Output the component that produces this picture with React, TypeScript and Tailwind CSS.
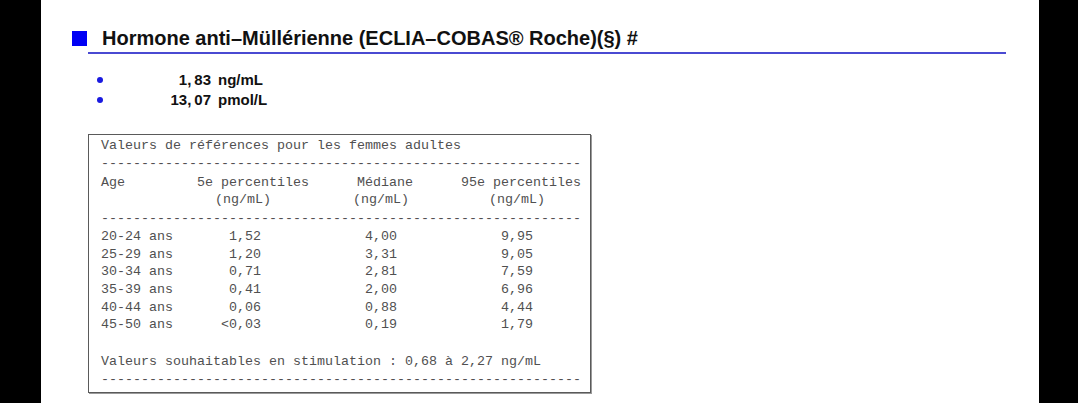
const rows = [
  ["20-24 ans", "1,52", "4,00", "9,95"],
  ["25-29 ans", "1,20", "3,31", "9,05"],
  ["30-34 ans", "0,71", "2,81", "7,59"],
  ["35-39 ans", "0,41", "2,00", "6,96"],
  ["40-44 ans", "0,06", "0,88", "4,44"],
  ["45-50 ans", "<0,03", "0,19", "1,79"],
];

const dashes = "-".repeat(60);

function pad(s: string, end: number) {
  // right-align value so it ends at column `end`
  return s.padStart(end);
}

function Row({ r }: { r: string[] }) {
  const line =
    r[0] +
    pad(r[1], 20 - r[0].length) +
    pad(r[2], 17) +
    pad(r[3], 17);
  return <div className="h-[17.7px] leading-[17px] whitespace-pre">{line}</div>;
}

function Result({ whole, frac, unit }: { whole: string; frac: string; unit: string }) {
  return (
    <div className="flex h-[20px] items-center">
      <span className="ml-[56px] h-[6px] w-[6px] rounded-full bg-[#1a1ae0]" />
      <span className="w-[108px] text-right">
        {whole},<span className="ml-[3px]">{frac}</span>
      </span>
      <span className="ml-[7px]">{unit}</span>
    </div>
  );
}

export default function App() {
  return (
    <div className="flex h-[403px] w-[1078px] bg-black">
      <div className="ml-[41px] h-full w-[998px] bg-white font-['Liberation_Sans',Arial,sans-serif]">
        <div className="flex items-start pt-[28px]">
          <span className="ml-[31px] mt-[3px] h-[15px] w-[15px] bg-[#0000f5]" />
          <div className="ml-[1px] w-[918px] border-b-2 border-[#4a4ad2] pb-[4px] pl-[14px] text-[20px] font-bold leading-[20px] text-[#111]">
            Hormone anti–Müllérienne (ECLIA–COBAS® Roche)(§) #
          </div>
        </div>

        <div className="mt-[16px] text-[15px] font-bold text-[#111]">
          <Result whole="1" frac="83" unit="ng/mL" />
          <Result whole="13" frac="07" unit="pmol/L" />
        </div>

        <div className="ml-[47px] mt-[24px] h-[259px] w-[503px] border border-[#5a5a5a] shadow-[1px_1px_0_#9a9a9a] pl-[12px] pt-[2px] font-['Liberation_Mono','Courier_New',monospace] text-[13.33px] text-[#505050]">
          <div className="h-[17px] leading-[17px] whitespace-pre">
            Valeurs de références pour les femmes adultes
          </div>
          <div className="mt-[1px] h-[17px] leading-[17px] whitespace-pre">{dashes}</div>
          <div className="mt-[2px] h-[17px] leading-[17px] whitespace-pre">
            {"Age         5e percentiles      Médiane      95e percentiles"}
          </div>
          <div className="flex h-[17px] leading-[17px] whitespace-pre">
            <span className="ml-[114px]">(ng/mL)</span>
            <span className="ml-[82px]">(ng/mL)</span>
            <span className="ml-[80px]">(ng/mL)</span>
          </div>
          <div className="mt-[2px] h-[17px] leading-[17px] whitespace-pre">{dashes}</div>
          <div className="mt-[1px]">
            {rows.map((r) => (
              <Row key={r[0]} r={r} />
            ))}
          </div>
          <div className="mt-[19px] h-[17px] leading-[17px] whitespace-pre">
            Valeurs souhaitables en stimulation : 0,68 à 2,27 ng/mL
          </div>
          <div className="mt-[1px] h-[17px] leading-[17px] whitespace-pre">{dashes}</div>
        </div>
      </div>
    </div>
  );
}
